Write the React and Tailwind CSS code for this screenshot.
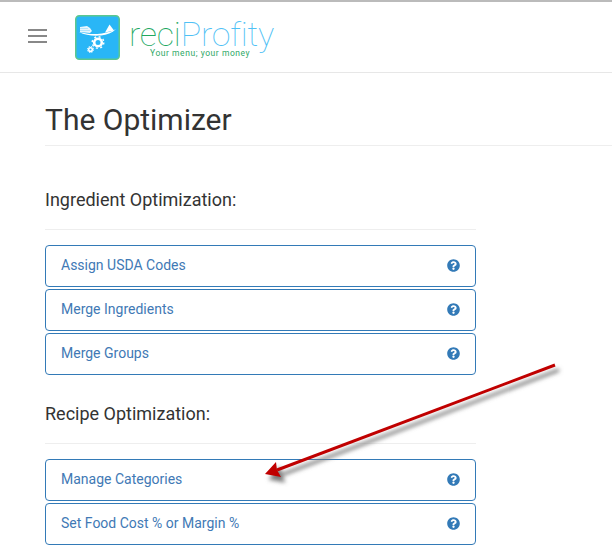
import React from 'react';
import { FaQuestionCircle } from 'react-icons/fa';

// logo mark: blue tile with a scale and two gears
const LogoMark = () => (
  <svg viewBox="0 0 45 45" className="w-[45px] h-[45px] shrink-0">
    <rect x="0.75" y="0.75" width="43.5" height="43.5" rx="3.5" fill="#29b6f6" stroke="#5cc78f" strokeWidth="1.5" />
    <path d="M4 17 C12 19 22 20 29 18 C34 17 38 16 41 14 C37 18 32 20 26 20.500 C18 21 10 20.500 4 17 Z" fill="#fff" />
    <path d="M5 12 L12 11 L15 13 L17 16 L15 18 L5 17 Z" fill="#e8f6fd" />
    <path d="M5 13.500 H13 M5 15.500 H15" stroke="#9fdcf8" strokeWidth="0.7" />
    <path d="M30 17.500 L34.500 9.500 L39 15.500 Z" fill="#fff" />
    <circle cx="23" cy="27.500" r="3.800" fill="none" stroke="#fff" strokeWidth="2.600" />
    <circle cx="23" cy="27.500" r="5.800" fill="none" stroke="#fff" strokeWidth="1.400" strokeDasharray="2 2.550" />
    <circle cx="15.500" cy="34.500" r="1.800" fill="none" stroke="#fff" strokeWidth="1.500" />
    <circle cx="15.500" cy="34.500" r="3.100" fill="none" stroke="#fff" strokeWidth="1" strokeDasharray="1.300 1.130" />
  </svg>
);

const OptionRow = ({ label }) => (
  <div className="flex items-center justify-between h-[42px] px-[15px] pb-[2px] border border-[#337ab7] rounded-[4px] bg-white">
    <span className="text-[14px] leading-[20px] text-[#4179b5]">{label}</span>
    <FaQuestionCircle className="text-[#337ab7] w-[13px] h-[13px]" />
  </div>
);

const Section = ({ title, items, className }) => (
  <section className={className}>
    <h2 className="text-[18px] leading-[20px] text-[#333]">{title}</h2>
    <div className="mt-[19px] mb-[15px] border-t border-[#eeeeee]" />
    <div className="flex flex-col gap-[2px]">
      {items.map((item) => (
        <OptionRow key={item} label={item} />
      ))}
    </div>
  </section>
);

// red annotation arrow pasted over the screenshot
const Arrow = () => (
  <svg className="absolute left-0 top-0 pointer-events-none" width="612" height="557" viewBox="0 0 612 557">
    <defs>
      <filter id="arrowShadow" x="-10%" y="-10%" width="120%" height="130%">
        <feGaussianBlur stdDeviation="2" />
      </filter>
    </defs>
    <g fill="#777" stroke="#777" filter="url(#arrowShadow)" transform="translate(4 5)">
      <path d="M555 365 L277 470" strokeWidth="3" />
      <path d="M265 474 L276 462 L277 470 L281 477 Z" />
    </g>
    <path d="M555 365 L277 470" stroke="#c00000" strokeWidth="3" fill="none" />
    <path d="M265 474 L276 462 L277 470 L281 477 Z" fill="#c00000" />
  </svg>
);

export default function App() {
  return (
    <div className="relative w-[612px] h-[557px] overflow-hidden bg-white font-['Roboto',sans-serif]">
      <header className="h-[73px] border-t-2 border-t-[#bbbbbb] border-b border-b-[#e7e7e7] flex items-center pl-[28px]">
        <div className="flex flex-col gap-[4px] w-[19px] mt-[-2px] shrink-0">
          <span className="h-[2px] bg-[#888]" />
          <span className="h-[2px] bg-[#888]" />
          <span className="h-[2px] bg-[#888]" />
        </div>
        <div className="ml-[28px] mt-[1px]">
          <LogoMark />
        </div>
        <div className="ml-[9px] flex flex-col items-start mt-[3px]">
          <div className="text-[34px] leading-[30px] font-thin tracking-[-0.2px]">
            <span className="text-[#22a85f]">reci</span>
            <span className="text-[#4fc1f5]">Profity</span>
          </div>
          <div className="ml-[21px] text-[8.5px] leading-[9px] tracking-[0.55px] text-[#2fa866]">
            Your menu; your money
          </div>
        </div>
      </header>

      <main className="pl-[45px]">
        <h1 className="mt-[25px] text-[30px] leading-[44px] text-[#333]">The Optimizer</h1>
        <div className="mt-[3px] border-t border-[#eeeeee]" />
        <div className="w-[431px]">
          <Section
            className="mt-[44px]"
            title="Ingredient Optimization:"
            items={['Assign USDA Codes', 'Merge Ingredients', 'Merge Groups']}
          />
          <Section
            className="mt-[29px]"
            title="Recipe Optimization:"
            items={['Manage Categories', 'Set Food Cost % or Margin %']}
          />
        </div>
      </main>

      <Arrow />
    </div>
  );
}
